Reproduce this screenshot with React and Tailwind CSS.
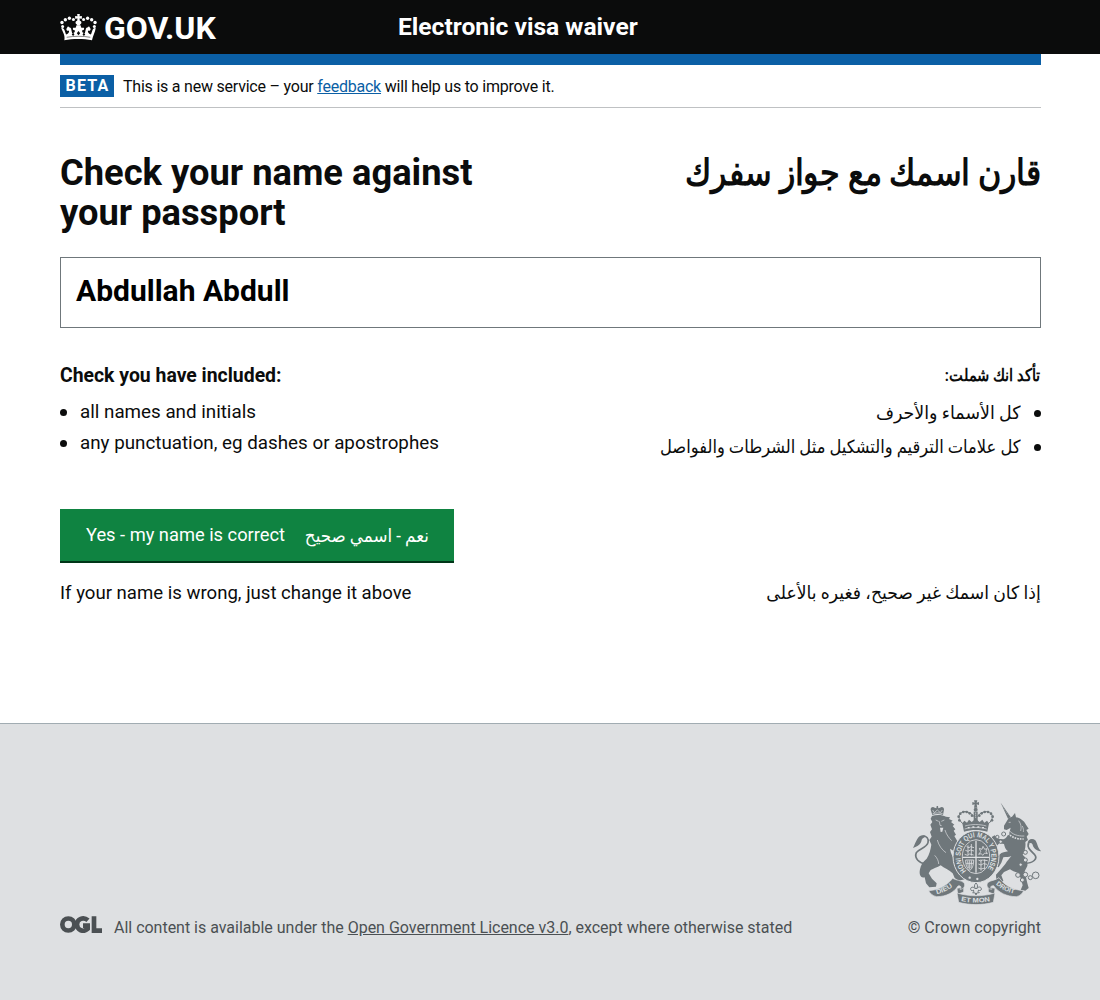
import React from "react";

const crownBalls = [[5, 25, 5], [7, 37, 4.5], [15, 17, 5], [27, 12.5, 5], [39, 16, 4.5], [69, 16, 4.5], [81, 12.5, 5], [93, 17, 5], [103, 25, 5], [101, 37, 4.5]];

function CrownLogo() {
  return (
    <svg viewBox="0 0 108 80" className="h-[27px] w-[37px]" fill="#fff" aria-hidden="true">
      {crownBalls.map(([x, y, r]) => <circle key={x + "-" + y} cx={x} cy={y} r={r} />)}
      <path d="M50 0h8l-1 7 7-1v8l-7-1 1 7c5 1 7 8 1 11l-2 3h-6l-2-3c-6-3-4-10 1-11l1-7-7 1V6l7 1z" />
      <path d="M3 42c5-2 8 2 10 7l4 12c6-2 10-6 9-12-5 3-10-2-7-7l4-6c3 4 7 3 9 7l3 13c6 1 9-2 8-8-5 1-7-3-5-7 3-1 6 1 8-1l2-7h12l2 7c2 2 5 0 8 1 2 4 0 8-5 7-1 6 2 9 8 8l3-13c2-4 6-3 9-7l4 6c3 5-2 10-7 7-1 6 3 10 9 12l4-12c2-5 5-9 10-7-2 12-8 22-11 36-25-5-57-5-82 0C15 64 8 54 3 42z" />
      <path d="M19 69c23-4 47-4 70 0" fill="none" stroke="#0b0c0c" strokeWidth="1.5" />
      <path d="M38 55l4 6-4 4-4-4zM70 55l4 6-4 4-4-4zM54 50l5 7-5 6-5-6z" fill="#0b0c0c" />
    </svg>
  );
}

const pearls = [[178, 91], [176, 80], [181, 71], [190, 66], [200, 66], [209, 70], [216, 77], [276, 91], [278, 80], [273, 71], [264, 66], [254, 66], [245, 70], [238, 77]];
const chainLinks = [[311, 132, 6], [292, 141, 5], [302, 155, 5], [376, 187, 6], [376, 210, 6], [362, 224, 5], [354, 255, 7], [367, 270, 6], [376, 254, 7], [391, 263, 6], [407, 256, 10]];

function Crest() {
  const c = "#6f777b";
  const bg = "#dee0e2";
  return (
    <svg viewBox="39 30 384 315" className="h-[105px] w-32" fill={c} aria-label="Royal coat of arms">
      <defs>
        <path id="garter" d="M199 243A46 57 0 1 1 257 243" />
        <path id="ribbonL" d="M108 313Q138 308 168 282" />
        <path id="ribbonM" d="M178 332Q227 343 278 332" />
        <path id="ribbonR" d="M284 281Q314 307 352 313" />
      </defs>

      {/* lion */}
      <path d="M97 75l-5-16c-1-6 6-11 12-6l5 2 1-7h4l1 7 5-2c6-5 13 0 12 6l-3 16c-10-4-22-4-32 0z" />
      <path d="M98 60l5 8 9-8 9 8 6-8M98 71c10-3 20-3 30 0" stroke={bg} strokeWidth="2" fill="none" />
      <path d="M96 78C108 74 126 74 138 80L150 82 147 87 158 92 153 96 163 104 158 108 166 118 161 122 168 134 163 138 170 150 176 162 170 168 178 180 173 192 163 194 160 182 150 176C152 192 160 206 170 216L174 240 186 256 194 268 176 272 164 264 158 250C148 240 132 234 122 226 112 232 100 236 92 240L86 250 96 266 110 280 108 290 88 292 78 280 74 262C60 266 57 250 60 238 62 224 70 214 80 206 88 194 92 178 94 164L88 150 95 140 90 126 96 118 91 104 97 96 92 86Z" />
      <path d="M78 222C58 220 42 205 49 188 56 176 80 174 84 158 87 146 80 137 68 139" fill="none" stroke={c} strokeWidth="5" />
      <path d="M77 137C54 130 50 152 39 174 54 168 64 162 65 149 68 142 74 143 77 137z" />
      <path d="M107 90l9 4M124 94l9-4M118 94l2 12 5 1M135 120c4 14 12 24 20 32M112 150c4 16 14 30 26 38M104 196c8 8 12 18 12 26" fill="none" stroke={bg} strokeWidth="2" />
      <path d="M120 113h10l-3 12-5 1z" fill={bg} />

      {/* unicorn */}
      <path d="M302 38l30 43-8 5z" />
      <path d="M306 47l20 30" stroke={bg} strokeWidth="1.2" strokeDasharray="3 3" />
      <path d="M326 84L336 80 345 69 348 82C360 84 372 92 378 104L386 116 379 120 386 132 380 140 384 150 376 156C378 172 374 184 368 194 378 202 384 214 382 228L374 244 378 262 382 280 386 294 376 302 362 300 368 286 362 264 354 248C344 246 336 242 330 238L312 246 304 256 310 272 300 284 289 272 288 254 304 236 316 222C322 212 330 204 334 198 326 202 318 200 310 202L304 218 296 232 286 228 292 214 298 194C306 186 316 186 324 184 316 178 314 170 312 162L298 160 290 168 282 158 274 142 284 136 294 146 310 148C318 146 322 138 328 128L332 113 320 120 312 118 312 107Z" />
      <path d="M327 121c10 12 26 18 46 17" fill="none" stroke={bg} strokeWidth="2" />
      <path d="M324 130c12 13 29 18 47 17" fill="none" stroke={bg} strokeWidth="5" strokeDasharray="5 3" />
      <path d="M356 92c7 9 9 20 6 31M367 108c3 7 4 12 3 18M326 97h6" fill="none" stroke={bg} strokeWidth="2" />
      <path d="M374 220C400 220 414 206 404 194 390 180 380 172 386 160" fill="none" stroke={c} strokeWidth="5" />
      <path d="M383 166C380 148 396 142 406 151 413 160 412 174 424 184 408 182 400 174 398 164 394 156 388 158 383 166z" />
      {chainLinks.map(([x, y, r]) => <circle key={x + "-" + y} cx={x} cy={y} r={r} fill={bg} stroke={c} strokeWidth="3" />)}

      {/* garter and shield */}
      <ellipse cx="228" cy="200" rx="69" ry="78" stroke={bg} strokeWidth="3" />
      <ellipse cx="228" cy="200" rx="41" ry="51" stroke={bg} strokeWidth="2.5" />
      <text fill={bg} fontFamily="Liberation Sans" fontWeight="700" fontSize="22">
        <textPath href="#garter" textLength="250" lengthAdjust="spacingAndGlyphs">HONI SOIT QUI MAL Y PENSE</textPath>
      </text>
      <path d="M228 152v96M188 202h80" stroke={bg} strokeWidth="4" />
      <g fill="none" stroke={bg} strokeWidth="2.5">
        <path d="M200 170l7 3 5-3 10 3M196 181l8 3 7-4 11 3M194 193l9 3 6-4 12 3M204 166v30M214 162v35" />
        <path d="M235 210l7 3 6-3 15 2M235 222l8 3 7-4 11 2M235 234l8 3 12-3M243 208v34M254 208v29" />
        <path d="M236 193l6-8-4-10 8 3 3-9 5 9 7-2-3 8 4 7-8-2-6 7-4-5z" />
        <path d="M197 210c-1 14 4 25 12 31 7-4 12-14 12-31zM203 212l2 22M209 211v27M215 211l-2 23M198 220h22" />
      </g>
      <circle cx="209" cy="263" r="3.5" fill={bg} />
      <circle cx="232" cy="267" r="3.5" fill={bg} />

      {/* crown */}
      <path d="M222 31h10l-2 7 7-2v9l-7-2 2 10h-10l2-10-7 2v-9l7 2z" />
      <circle cx="227" cy="59" r="6" />
      <path d="M191 103c-24-18-14-41 8-38 15 2 22 13 28 22 6-9 13-20 28-22 22-3 32 20 8 38" fill="none" stroke={c} strokeWidth="3" />
      <path d="M221 65h12v34h-12z" />
      <path d="M227 68v28" stroke={bg} strokeWidth="3" strokeDasharray="3 3" />
      {pearls.map(([x, y]) => <circle key={x + "-" + y} cx={x} cy={y} r="4" />)}
      <path d="M187 100l6-8 8 6 6-9 8 7 5-4 7-9 7 9 5 4 8-7 6 9 8-6 6 8-5 25c-23-7-47-7-70 0z" />
      <path d="M194 117c22-6 44-6 66 0M195 108c22-6 42-6 64 0" fill="none" stroke={bg} strokeWidth="2" />
      <path d="M203 113h6M217 111h6M232 111h6M246 113h6" stroke={bg} strokeWidth="4" />

      {/* motto ribbon */}
      <g stroke={bg} strokeWidth="2">
        <path d="M191 292l-20 3 2 18 18-7zM265 292l20 3-2 18-18-7z" />
        <path d="M86 302C116 300 140 288 158 265 170 272 182 270 192 278 198 288 190 298 180 298 186 292 182 286 174 288 162 308 138 320 110 320 98 318 90 310 86 302z" />
        <path d="M371 302C341 300 315 288 297 263 285 272 273 270 263 278 257 288 265 298 275 298 269 292 273 286 281 287 295 308 321 320 349 320 361 318 367 310 371 302z" />
        <path d="M171 309c37 11 77 11 114 0l-5 28c-34 9-70 9-104 0z" />
      </g>
      <g fill={bg} fontFamily="Liberation Sans" fontWeight="700" fontSize="20">
        <text><textPath href="#ribbonL" startOffset="2" textLength="54" lengthAdjust="spacingAndGlyphs">DIEU</textPath></text>
        <text><textPath href="#ribbonM" startOffset="5" textLength="88" lengthAdjust="spacingAndGlyphs">ET MON</textPath></text>
        <text><textPath href="#ribbonR" startOffset="4" textLength="62" lengthAdjust="spacingAndGlyphs">DROIT</textPath></text>
      </g>
      <path d="M228 279c-6 6-6 11-1 18-6-8-16-7-15 1 1 5 6 5 8 2l2 4-4 4 8 1 2 6 2-6 8-1-4-4 2-4c3 3 8 2 8-3 0-8-10-8-15 0 5-7 5-12-1-18z" fill={bg} stroke={c} strokeWidth="3" />
    </svg>
  );
}

function OglLogo() {
  return (
    <svg viewBox="0 0 126 51" className="h-[17px] w-[42px]" fill="none" stroke="#4b5053" strokeWidth="14" aria-label="OGL">
      <circle cx="25" cy="25.5" r="18" />
      <path d="M84 13c-14-12-33-4-33 12.500s19 25 32 13V29H69" />
      <path d="M102 1v43h24" />
    </svg>
  );
}

const arabic = "block origin-right whitespace-nowrap";

const arabicPoints = [
  ["كل الأسماء والأحرف", "scale-x-[0.967]"],
  ["كل علامات الترقيم والتشكيل مثل الشرطات والفواصل", "scale-x-[0.907]"],
];

export default function App() {
  return (
    <div className="flex h-[1000px] w-[1100px] flex-col overflow-hidden bg-white font-['Roboto','DejaVu_Sans',sans-serif] text-[#0b0c0c]">
      <header className="flex h-[54px] shrink-0 items-center bg-[#0b0c0c] pl-[60px] text-white">
        <div className="flex w-[338px] items-center gap-[7px]">
          <CrownLogo />
          <span className="mt-0.5 text-[32px] leading-8 font-bold">GOV.UK</span>
        </div>
        <span className="text-[24.6px] leading-8 font-bold whitespace-nowrap">Electronic visa waiver</span>
      </header>

      <main className="mx-[60px] h-[669px] w-[981px] shrink-0">
        <div className="h-[10.5px] bg-[#0b5fa5]" />
        <div className="flex h-[43.5px] items-center gap-[9px] border-b border-[#bfc1c3] text-base">
          <span className="flex h-[22px] w-[54px] items-center justify-center bg-[#0b5fa5] pl-px text-base font-bold tracking-[1.2px] text-white">BETA</span>
          <span className="pt-0.5 text-[16px] tracking-[-0.22px] whitespace-nowrap">This is a new service – your <a href="#" className="text-[#0b5fa5] underline">feedback</a> will help us to improve it.</span>
        </div>

        <div className="mt-[45px] flex h-20 justify-between">
          <h1 className="w-[450px] text-[36.3px] leading-10 font-bold">Check your name against<br />your passport</h1>
          <h1 dir="rtl" className="h-10 origin-right scale-x-[0.886] font-['Roboto',serif] text-[36px] leading-10 font-bold whitespace-nowrap">قارن اسمك مع جواز سفرك</h1>
        </div>

        <div className="mt-6 flex h-[71px] items-center border border-[#6f777b] pr-4 pb-1 pl-[15px] text-[30px] font-bold text-black">Abdullah Abdull</div>

        <div className="mt-8 flex h-[149px] justify-between">
          <div>
            <h2 className="pt-px text-[19.4px] leading-[30px] font-bold">Check you have included:</h2>
            <ul className="mt-1.5 text-[18.8px] leading-[31px]">
              {["all names and initials", "any punctuation, eg dashes or apostrophes"].map((t) => (
                <li key={t} className="flex items-center gap-[13px]">
                  <i className="size-[7px] rounded-full bg-[#0b0c0c]" />{t}
                </li>
              ))}
            </ul>
          </div>
          <div dir="rtl">
            <h2 className={arabic + " scale-x-[0.86] font-['Roboto',serif] text-[17px] leading-[30px] font-bold"}>تأكد انك شملت:</h2>
            <ul className="mt-1.5 text-[18px] leading-[34px]">
              {arabicPoints.map(([t, squeeze]) => (
                <li key={t} className="flex items-center gap-[13px]">
                  <i className="size-[7px] rounded-full bg-[#0b0c0c]" />
                  <span className={arabic + " " + squeeze}>{t}</span>
                </li>
              ))}
            </ul>
          </div>
        </div>

        <button className="flex h-[54px] w-[394px] items-center justify-between border-b-2 border-[#003618] bg-[#0f8341] pr-[25px] pl-[26px] text-white">
          <span className="text-[18.3px] whitespace-nowrap">Yes - my name is correct</span>
          <span dir="rtl" className="w-[125px] text-[18px]"><span className={arabic + " scale-x-[0.93]"}>نعم - اسمي صحيح</span></span>
        </button>

        <div className="mt-[15px] flex justify-between text-[18.6px] leading-[30px]">
          <p>If your name is wrong, just change it above</p>
          <p dir="rtl" className={arabic + " scale-x-[0.957] text-[18px]"}>إذا كان اسمك غير صحيح، فغيره بالأعلى</p>
        </div>
      </main>

      <footer className="flex flex-1 items-start justify-between border-t border-[#a1acb2] bg-[#dee0e2] pr-[59px] pl-[60px] text-base leading-6 text-[#4b5053]">
        <div className="mt-[191px] flex gap-3">
          <div className="pt-px"><OglLogo /></div>
          <p className="pt-px tracking-[-0.015px] whitespace-nowrap">All content is available under the <a href="#" className="underline">Open Government Licence v3.0</a>, except where otherwise stated</p>
        </div>
        <div className="mt-[76px] flex flex-col items-end gap-[11px]">
          <Crest />
          <p className="text-[16.1px] whitespace-nowrap">© Crown copyright</p>
        </div>
      </footer>
    </div>
  );
}
